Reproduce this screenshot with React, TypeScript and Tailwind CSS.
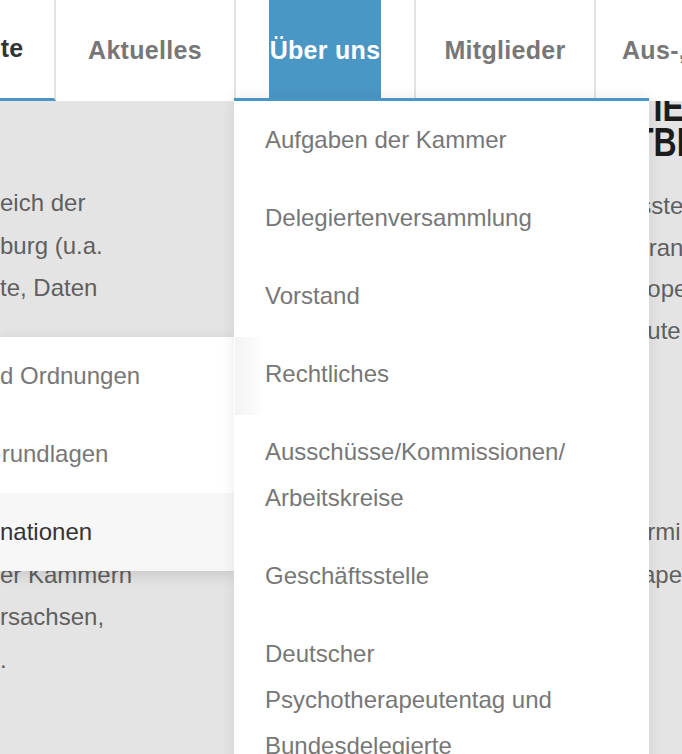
import React from 'react';

const MENU = [
  ['Aufgaben der Kammer'],
  ['Delegiertenversammlung'],
  ['Vorstand'],
  ['Rechtliches'],
  ['Ausschüsse/Kommissionen/', 'Arbeitskreise'],
  ['Geschäftsstelle'],
  ['Deutscher', 'Psychotherapeutentag und', 'Bundesdelegierte'],
  ['Fortbildung'],
];

const SUBMENU = [
  { label: 'd Ordnungen', active: false, shift: '' },
  { label: 'Grundlagen', active: false, shift: '-ml-[17px]' },
  { label: 'nationen', active: true, shift: '' },
];

const App = () => {
  return (
    <div className="relative w-[682px] h-[754px] overflow-hidden bg-[#e4e4e4] font-['Liberation_Sans',Arial,sans-serif]">
      {/* Top navigation */}
      <nav className="relative z-10 flex h-[101px] bg-white text-[25px] font-bold tracking-[0.3px]">
        <div className="-ml-[124px] w-[180px] shrink-0 border-r-2 border-r-[#e3e3e3] border-b-[3px] border-b-[#4a97c5] flex items-center justify-center text-[#333]">
          Startseite
        </div>
        <div className="w-[180px] shrink-0 border-r-2 border-r-[#e3e3e3] flex items-center justify-center text-[#777]">
          Aktuelles
        </div>
        <div className="w-[180px] shrink-0 border-r-2 border-r-[#e3e3e3] flex justify-center">
          <span className="flex h-full items-center bg-[#4a97c5] px-px text-white">Über uns</span>
        </div>
        <div className="w-[180px] shrink-0 border-r-2 border-r-[#e3e3e3] flex items-center justify-center text-[#777]">
          Mitglieder
        </div>
        <div className="flex-1 flex items-center pl-[26px] text-[#777] whitespace-nowrap overflow-hidden">
          Aus-, Fort- und Weiterbildung
        </div>
      </nav>

      {/* Page content behind the overlay */}
      <div className="flex text-[24px] leading-[42.5px] text-[#5f5f5f]">
        <div className="w-[234px] shrink-0 pt-[81px] whitespace-nowrap">
          <div>eich der</div>
          <div>burg (u.a.</div>
          <div>te, Daten</div>
          <div className="mt-[244px]">er Kammern</div>
          <div>rsachsen,</div>
          <div>.</div>
        </div>
        <div className="w-[400px] shrink-0" />
        <div className="flex-1 whitespace-nowrap">
          <div className="-mt-[11px] text-[40px] leading-[35px] font-bold text-[#1c1c1c]">
            <div className="origin-left scale-x-[0.8]">TIE</div>
            <div className="origin-left scale-x-[0.8]">TBI</div>
          </div>
          <div className="mt-[25px] leading-[41.5px]">
            <div>isste</div>
            <div>Fran</div>
            <div>uope</div>
            <div>eute</div>
          </div>
          <div className="mt-[159px] leading-[43px]">
            <div>ermi</div>
            <div>rapeu</div>
          </div>
        </div>
      </div>

      {/* Open submenu on the left */}
      <ul className="absolute left-0 top-[337px] z-20 w-[234px] bg-white shadow-[0_4px_14px_rgba(0,0,0,0.13)] text-[24px] whitespace-nowrap overflow-hidden">
        {SUBMENU.map(item => (
          <li
            key={item.label}
            className={
              item.active
                ? 'py-4 leading-[46px] bg-[#f7f7f7] text-[#333]'
                : 'py-4 leading-[46px] text-[#777]'
            }
          >
            <span className={item.shift}>{item.label}</span>
          </li>
        ))}
      </ul>

      {/* Main dropdown for "Über uns" */}
      <ul className="absolute left-[234px] top-[98px] z-20 w-[415px] bg-white border-t-[3px] border-t-[#4a97c5] shadow-[0_0_14px_rgba(0,0,0,0.09)] text-[24px] leading-[46px] text-[#777]">
        {MENU.map(lines => (
          <li key={lines[0]} className="pl-[31px] pr-[31px] py-4">
            {lines.map(line => (
              <div key={line}>{line}</div>
            ))}
          </li>
        ))}
      </ul>

      {/* shadow cast by the first submenu row */}
      <div className="absolute left-[235px] top-[337px] z-30 w-[32px] h-[78px] bg-linear-to-r from-black/[0.045] to-transparent" />
    </div>
  );
};

export default App;
